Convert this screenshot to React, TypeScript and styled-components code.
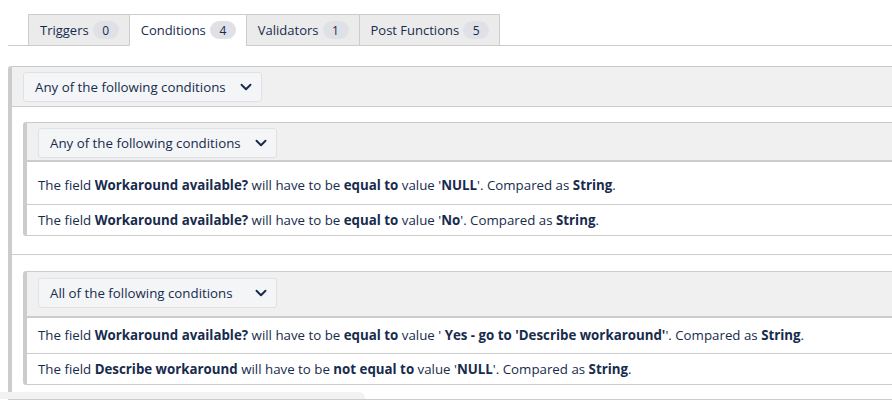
import React from 'react'
import styled, { createGlobalStyle } from 'styled-components'
import { ChevronDown } from 'lucide-react'

const GlobalStyle = createGlobalStyle`
    html, body {
        margin: 0;
        padding: 0;
        background: #ffffff;
        overflow: hidden;
    }
    body {
        font-family: "Open Sans", "Noto Sans", "Liberation Sans", sans-serif;
        font-size: 13.3px;
        color: #172b4d;
    }
`

const Page = styled.div`
    position: relative;
    height: 400px;
    padding: 14px 0 0 8px;
    box-sizing: border-box;
    width: 892px;
`

const TabBar = styled.div`
    display: flex;
    padding-left: 20px;
    border-bottom: 1px solid #cccccc;
`

const Tab = styled.div<{ $active?: boolean }>`
    display: flex;
    align-items: center;
    gap: 4px;
    height: 30px;
    padding: 0 10px 0 11px;
    margin-left: -1px;
    margin-bottom: -1px;
    border: 1px solid #cccccc;
    border-bottom: ${p => (p.$active ? '1px solid #ffffff' : '1px solid #cccccc')};
    background: ${p => (p.$active ? '#ffffff' : '#ebebeb')};
    color: #172b4d;
    font-size: 13px;
    &:first-child {
        margin-left: 0;
    }
`

const Badge = styled.span`
    display: inline-flex;
    align-items: center;
    justify-content: center;
    min-width: 26px;
    height: 18px;
    padding: 0 6px;
    box-sizing: border-box;
    border-radius: 9px;
    background: #dfe1e6;
    font-size: 12px;
    color: #172b4d;
`

const Block = styled.div<{ $inner?: boolean }>`
    margin-top: ${p => (p.$inner ? '0' : '20px')};
    border-left: 4px solid #cccccc;
    border-top: 1px solid #cccccc;
    border-bottom: ${p => (p.$inner ? '1px solid #cccccc' : 'none')};
    border-top-left-radius: 3px;
    border-bottom-left-radius: ${p => (p.$inner ? '3px' : '0')};
    background: #ffffff;
`

const BlockHeader = styled.div<{ $top?: number; $bottom?: number }>`
    display: flex;
    padding: ${p => p.$top ?? 5}px 11px ${p => p.$bottom ?? 4}px;
    background: #f0f0f0;
    border-bottom: 1px solid #cccccc;
`

const Dropdown = styled.div`
    display: flex;
    align-items: center;
    justify-content: space-between;
    width: 239px;
    height: 30px;
    box-sizing: border-box;
    padding: 0 6px 0 11px;
    border: 1px solid #dfe1e6;
    border-radius: 3px;
    background: #f4f5f7;
    color: #172b4d;
    svg {
        color: #172b4d;
    }
`

const GroupSlot = styled.div<{ $top: number; $bottom: number }>`
    padding: ${p => p.$top}px 0 ${p => p.$bottom}px 11px;
    border-bottom: 1px solid #cccccc;
`

const Row = styled.div<{ $height: number; $shift: number }>`
    display: flex;
    align-items: center;
    height: ${p => p.$height}px;
    box-sizing: content-box;
    padding: 0 11px;
    white-space: pre;
    border-top: 1px solid #cccccc;
    &:first-of-type {
        border-top: none;
    }
    span {
        position: relative;
        top: ${p => p.$shift}px;
    }
    b {
        font-weight: 700;
    }
`

const ScrollThumb = styled.div`
    position: absolute;
    left: 0;
    bottom: 1px;
    width: 365px;
    height: 7px;
    border-radius: 0 6px 0 0;
    background: #f2f2f2;
`

type Condition = { field: string; op: string; value: string; height: number; shift: number }

type Group = {
    mode: string
    conditions: Condition[]
    top: number
    bottom: number
    headTop: number
    headBottom: number
}

const groups: Group[] = [
    {
        mode: 'Any of the following conditions',
        top: 15,
        bottom: 18,
        headTop: 5,
        headBottom: 2,
        conditions: [
            { field: 'Workaround available?', op: 'equal to', value: 'NULL', height: 42, shift: 2 },
            { field: 'Workaround available?', op: 'equal to', value: 'No', height: 30, shift: 0 },
        ],
    },
    {
        mode: 'All of the following conditions',
        top: 16,
        bottom: 14,
        headTop: 6,
        headBottom: 8,
        conditions: [
            { field: 'Workaround available?', op: 'equal to', value: " Yes - go to 'Describe workaround'", height: 35, shift: -1 },
            { field: 'Describe workaround', op: 'not equal to', value: 'NULL', height: 30, shift: 0 },
        ],
    },
]

const tabs = [
    { name: 'Triggers', count: 0 },
    { name: 'Conditions', count: 4, active: true },
    { name: 'Validators', count: 1 },
    { name: 'Post Functions', count: 5 },
]

const ModeSelect = ({ label }: { label: string }) => (
    <Dropdown>
        <span>{label}</span>
        <ChevronDown size={18} strokeWidth={2.6} />
    </Dropdown>
)

const App = () => {
    return (
        <Page>
            <GlobalStyle />
            <TabBar>
                {tabs.map(tab => (
                    <Tab key={tab.name} $active={tab.active}>
                        {tab.name}
                        <Badge>{tab.count}</Badge>
                    </Tab>
                ))}
            </TabBar>
            <Block>
                <BlockHeader>
                    <ModeSelect label='Any of the following conditions' />
                </BlockHeader>
                {groups.map((group, index) => (
                    <GroupSlot key={index} $top={group.top} $bottom={group.bottom}>
                        <Block $inner>
                            <BlockHeader $top={group.headTop} $bottom={group.headBottom}>
                                <ModeSelect label={group.mode} />
                            </BlockHeader>
                            {group.conditions.map((c, i) => (
                                <Row key={i} $height={c.height} $shift={c.shift}>
                                    <span>
                                        The field <b>{c.field}</b> will have to be <b>{c.op}</b> value '<b>{c.value}</b>'. Compared as <b>String</b>.
                                    </span>
                                </Row>
                            ))}
                        </Block>
                    </GroupSlot>
                ))}
            </Block>
            <ScrollThumb />
        </Page>
    )
}

export default App
